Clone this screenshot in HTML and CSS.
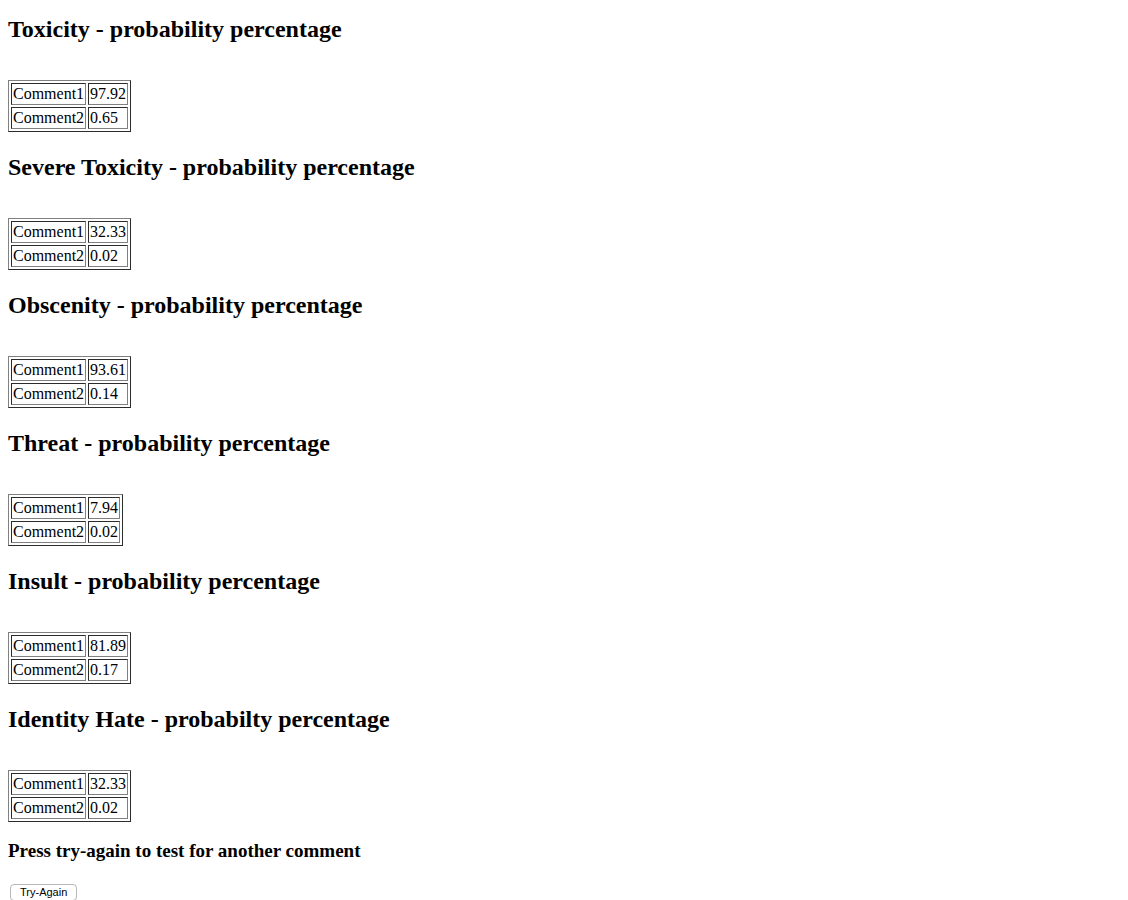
FILE: index.html
```html
<!DOCTYPE html>
<html>
<head>
<meta charset="utf-8">
<title>Results</title>
<link rel="stylesheet" href="styles.css">
</head>
<body>
<h2 class="title first">Toxicity - probability percentage</h2>
<br>
<table class="scores">
<tr><td>Comment1</td><td>97.92</td></tr>
<tr><td>Comment2</td><td>0.65</td></tr>
</table>
<h2 class="title">Severe Toxicity - probability percentage</h2>
<br>
<table class="scores">
<tr><td>Comment1</td><td>32.33</td></tr>
<tr><td>Comment2</td><td>0.02</td></tr>
</table>
<h2 class="title">Obscenity - probability percentage</h2>
<br>
<table class="scores">
<tr><td>Comment1</td><td>93.61</td></tr>
<tr><td>Comment2</td><td>0.14</td></tr>
</table>
<h2 class="title">Threat - probability percentage</h2>
<br>
<table class="scores">
<tr><td>Comment1</td><td>7.94</td></tr>
<tr><td>Comment2</td><td>0.02</td></tr>
</table>
<h2 class="title">Insult - probability percentage</h2>
<br>
<table class="scores">
<tr><td>Comment1</td><td>81.89</td></tr>
<tr><td>Comment2</td><td>0.17</td></tr>
</table>
<h2 class="title">Identity Hate - probabilty percentage</h2>
<br>
<table class="scores">
<tr><td>Comment1</td><td>32.33</td></tr>
<tr><td>Comment2</td><td>0.02</td></tr>
</table>
<h3 class="prompt">Press try-again to test for another comment</h3>
<button class="again" type="button">Try-Again</button>
</body>
</html>
```
FILE: styles.css
```css
html {
  background: #ffffff;
}
body {
  margin: 8px;
  font-family: "Liberation Serif", "Times New Roman", serif;
  font-size: 16px;
  color: #000000;
}
.title {
  font-size: 24px;
  font-weight: bold;
  margin: 22px 0 19px;
  line-height: 27px;
}
.title.first {
  margin-top: 8px;
}
.scores {
  border: 1px outset #808080;
  border-spacing: 2px;
  border-collapse: separate;
  line-height: 18px;
}
.scores td {
  border: 1px inset #808080;
  padding: 1px;
}
.prompt {
  font-size: 19px;
  font-weight: bold;
  margin: 18px 0 18.72px;
  line-height: 21px;
}
.again {
  font-family: "Liberation Sans", Arial, sans-serif;
  font-size: 11px;
  margin: 4px 2px 2px;
  padding: 1px 9px;
  background: #ffffff;
  color: #000000;
  border: 1px solid #b8b8b8;
  border-radius: 4px;
  line-height: 13px;
}
```
